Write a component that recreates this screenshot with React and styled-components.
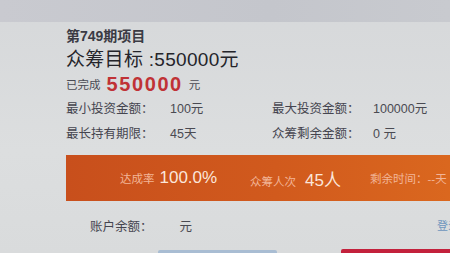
import React from 'react'
import styled, { createGlobalStyle } from 'styled-components'

const GlobalStyle = createGlobalStyle`
  html, body {
    margin: 0;
    padding: 0;
  }
  body {
    background: #d9dbdc;
    font-family: "Liberation Sans", "Noto Sans CJK SC", sans-serif;
  }
`

const Screen = styled.div`
  width: 450px;
  height: 253px;
  overflow: hidden;
  background: linear-gradient(180deg, #d6d8da 0%, #dcdedf 60%, #d9dbdc 100%);
  display: flex;
  flex-direction: column;
`

const TopBand = styled.div`
  height: 22px;
  flex-shrink: 0;
  background: linear-gradient(90deg, #c9cad0 0%, #c4c6cc 60%, #c8cacf 100%);
`

const Content = styled.div`
  padding-left: 66px;
  display: flex;
  flex-direction: column;
`

const Period = styled.div`
  margin-top: 5px;
  font-size: 14px;
  line-height: 18px;
  font-weight: 700;
  color: #3b3b44;
`

const Goal = styled.div`
  margin-top: 4px;
  font-size: 19px;
  line-height: 22px;
  color: #24242a;
  letter-spacing: 0.3px;
`

const Done = styled.div`
  margin-top: 1px;
  height: 24px;
  display: flex;
  align-items: center;
  font-size: 11.5px;
  color: #4b4b55;
`

const DoneAmount = styled.span`
  margin: 0 6px 0 6px;
  font-size: 20px;
  letter-spacing: 1.6px;
  color: #c03236;
  font-weight: 700;
`

const InfoGrid = styled.div`
  margin-top: 4px;
  display: grid;
  grid-template-columns: 104px 102px 101px 1fr;
  row-gap: 7px;
  font-size: 12.5px;
  line-height: 18px;
  color: #45454f;
`

const Label = styled.span`
  white-space: nowrap;
`

const Value = styled.span`
  white-space: nowrap;
  color: #4a4a52;
`

const StatBar = styled.div`
  margin-top: 12px;
  width: 420px;
  height: 46px;
  flex-shrink: 0;
  display: flex;
  align-items: center;
  padding-left: 54px;
  box-sizing: border-box;
  background: linear-gradient(90deg, #c84f1c 0%, #d15a1d 50%, #dc6a1f 100%);
`

const Stat = styled.div`
  width: ${p => p.$w}px;
  flex-shrink: 0;
  display: flex;
  align-items: baseline;
  white-space: nowrap;
`

const StatLabel = styled.span`
  font-size: 11.5px;
  color: #f2b597;
  margin-right: ${p => p.$gap}px;
`

const StatValue = styled.span`
  font-size: 17px;
  color: #fbe6da;
`

const BalanceRow = styled.div`
  margin-top: 15px;
  height: 18px;
  display: flex;
  align-items: center;
  padding-left: 24px;
  font-size: 12.5px;
  color: #45454f;
`

const BalanceValue = styled.span`
  margin-left: 27px;
  color: #4a4a52;
`

const Login = styled.span`
  margin-left: auto;
  margin-right: -9px;
  font-size: 11px;
  color: #6d95bd;
`

const ButtonRow = styled.div`
  margin-top: 15px;
  display: flex;
  align-items: flex-start;
`

const Button = styled.div`
  flex-shrink: 0;
  height: 10px;
  margin-left: ${p => p.$left}px;
  width: ${p => p.$w}px;
  margin-top: ${p => p.$top}px;
  border-radius: 2px 2px 0 0;
  background: ${p => p.$bg};
`

export default function App() {
  return (
    <Screen>
      <GlobalStyle />
      <TopBand />
      <Content>
        <Period>第749期项目</Period>
        <Goal>众筹目标 :550000元</Goal>
        <Done>
          已完成<DoneAmount>550000</DoneAmount>元
        </Done>
        <InfoGrid>
          <Label>最小投资金额：</Label>
          <Value>100元</Value>
          <Label>最大投资金额：</Label>
          <Value>100000元</Value>
          <Label>最长持有期限：</Label>
          <Value>45天</Value>
          <Label>众筹剩余金额：</Label>
          <Value>0 元</Value>
        </InfoGrid>
      </Content>
      <Content>
        <StatBar>
          <Stat $w={130}>
            <StatLabel $gap={5}>达成率</StatLabel>
            <StatValue>100.0%</StatValue>
          </Stat>
          <Stat $w={120}>
            <StatLabel $gap={9}>众筹人次</StatLabel>
            <StatValue>45人</StatValue>
          </Stat>
          <Stat $w={100}>
            <StatLabel $gap={0}>剩余时间：--天</StatLabel>
          </Stat>
        </StatBar>
        <BalanceRow>
          账户余额：<BalanceValue>元</BalanceValue>
          <Login>登录</Login>
        </BalanceRow>
      </Content>
      <ButtonRow>
        <Button $left={158} $w={119} $top={1} $bg="#a9bdd3" />
        <Button $left={64} $w={120} $top={0} $bg="#c3213c" />
      </ButtonRow>
    </Screen>
  )
}
